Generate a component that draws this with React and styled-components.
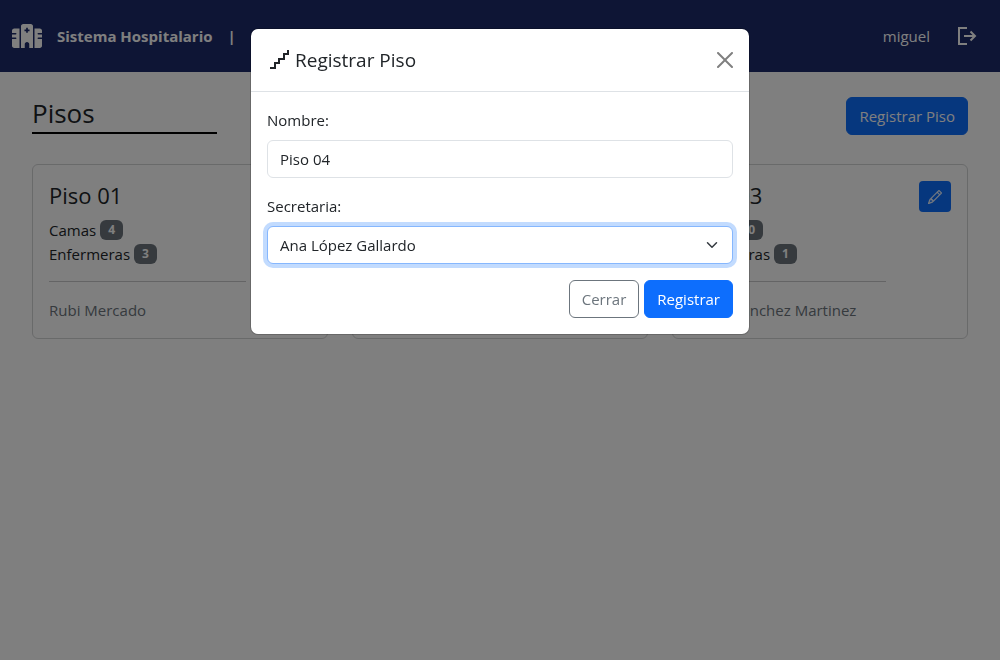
import React, { useState } from "react";
import styled, { createGlobalStyle } from "styled-components";
import { BsPencil } from "react-icons/bs";

const GlobalStyle = createGlobalStyle`
  *, *::before, *::after { box-sizing: border-box; }
  body {
    margin: 0;
    background: #fff;
    color: #212529;
    font-family: "Segoe UI", "Open Sans", "Noto Sans", sans-serif;
    font-size: 15px;
    line-height: 24px;
  }
  button, input, select { font: inherit; }
`;

const Navbar = styled.header`
  display: flex;
  align-items: center;
  justify-content: space-between;
  height: 72px;
  padding: 0 22px 0 12px;
  background: #1c2a6b;
  color: #fff;
`;

const Brand = styled.a`
  display: flex;
  align-items: center;
  gap: 15px;
  color: inherit;
  font-weight: 700;
  text-decoration: none;
`;

const UserArea = styled.div`
  display: flex;
  align-items: center;
  gap: 24px;
`;

const IconButton = styled.button`
  display: flex;
  padding: 0;
  border: 0;
  background: none;
  color: inherit;
`;

const Main = styled.main`
  padding: 25px 32px;
`;

const PageHead = styled.div`
  display: flex;
  align-items: center;
  justify-content: space-between;
  margin-bottom: 29px;
`;

const PageTitle = styled.h1`
  width: 185px;
  margin: 0;
  padding-bottom: 4px;
  border-bottom: 2px solid #000;
  font-size: 26px;
  font-weight: 500;
  line-height: 30px;
`;

const Button = styled.button`
  height: 38px;
  padding: 0 12px;
  border: 1px solid ${(p) => (p.$outline ? "#6c757d" : "#0d6efd")};
  border-radius: 6px;
  background: ${(p) => (p.$outline ? "#fff" : "#0d6efd")};
  color: ${(p) => (p.$outline ? "#6c757d" : "#fff")};
  white-space: nowrap;
`;

const CardGrid = styled.section`
  display: grid;
  grid-template-columns: repeat(3, minmax(0, 1fr));
  gap: 24px;
`;

const Card = styled.article`
  display: flex;
  align-items: flex-start;
  justify-content: space-between;
  padding: 16px;
  border: 1px solid #d3d4d5;
  border-radius: 6px;
`;

const CardInfo = styled.div`
  flex: 0 0 75%;
`;

const CardTitle = styled.h2`
  margin: 0 0 8px;
  font-size: 22px;
  font-weight: 500;
  line-height: 29px;
`;

const Stat = styled.div`
  display: flex;
  align-items: center;
  gap: 4px;
`;

const Badge = styled.span`
  padding: 0 8px;
  border-radius: 6px;
  background: #6c757d;
  color: #fff;
  font-size: 12px;
  font-weight: 700;
  line-height: 20px;
`;

const Divider = styled.hr`
  margin: 15px 0 16px;
  border: 0;
  border-top: 1px solid #c8c9ca;
`;

const Secretary = styled.p`
  margin: 0;
  color: #6c757d;
  white-space: nowrap;
`;

const EditButton = styled.button`
  display: flex;
  align-items: center;
  justify-content: center;
  width: 32px;
  height: 31px;
  padding: 0;
  border: 0;
  border-radius: 4px;
  background: #0d6efd;
  color: #fff;

  svg {
    stroke: currentColor;
    stroke-width: 0.4;
  }
`;

const Backdrop = styled.div`
  position: fixed;
  inset: 0;
  overflow-y: auto;
  padding: 28px 16px;
  background: rgba(0, 0, 0, 0.5);
`;

const Dialog = styled.div`
  max-width: 500px;
  margin: 0 auto;
  border: 1px solid rgba(0, 0, 0, 0.18);
  border-radius: 8px;
  background: #fff;
  background-clip: padding-box;
`;

const DialogHeader = styled.div`
  display: flex;
  align-items: center;
  justify-content: space-between;
  padding: 16px;
  border-bottom: 1px solid #dee2e6;
`;

const DialogTitle = styled.h2`
  display: flex;
  align-items: center;
  gap: 4px;
  margin: 0;
  font-size: 19px;
  font-weight: 500;
  line-height: 30px;
`;

const Form = styled.form`
  padding: 16px;
`;

const Field = styled.div`
  margin-bottom: 16px;
`;

const Label = styled.label`
  display: block;
  margin-bottom: 8px;
`;

const TextInput = styled.input`
  display: block;
  width: 100%;
  height: 38px;
  padding: 0 12px;
  border: 1px solid #dee2e6;
  border-radius: 6px;
  background: #fff;
  color: inherit;
  outline: 0;

  &:focus {
    border-color: #86b7fe;
    box-shadow: 0 0 0 4px rgba(13, 110, 253, 0.25);
  }
`;

const SelectWrap = styled.div`
  position: relative;

  svg {
    position: absolute;
    top: 13px;
    right: 15px;
    pointer-events: none;
  }
`;

const Select = styled(TextInput).attrs({ as: "select" })`
  appearance: none;
`;

const Actions = styled.div`
  display: flex;
  justify-content: flex-end;
  gap: 5px;
`;

const HospitalIcon = () => (
  <svg width="30" height="24" viewBox="0 0 640 512" fill="currentColor" fillRule="evenodd" aria-hidden="true">
    <path d="M192 48c0-26.5 21.5-48 48-48h160c26.5 0 48 21.5 48 48v464h-80v-80c0-26.5-21.5-48-48-48s-48 21.5-48 48v80h-80zM302 80v36h-36v36h36v36h36v-36h36v-36h-36V80z" />
    <path d="M48 96h112v416H48c-26.500 0-48-21.500-48-48V320h80c8.800 0 16-7.200 16-16s-7.200-16-16-16H0v-64h80c8.800 0 16-7.200 16-16s-7.200-16-16-16H0v-48c0-26.500 21.500-48 48-48z" />
    <path d="M592 96H480v416h112c26.500 0 48-21.500 48-48V320h-80c-8.800 0-16-7.200-16-16s7.200-16 16-16h80v-64h-80c-8.800 0-16-7.200-16-16s7.200-16 16-16h80v-48c0-26.500-21.500-48-48-48z" />
  </svg>
);

const LogoutIcon = () => (
  <svg width="24" height="24" viewBox="0 0 24 24" fill="none" stroke="currentColor" strokeWidth="2" aria-hidden="true">
    <path d="M13 4H5v16h8M10 12h11M16.500 7.500L21 12l-4.500 4.500" />
  </svg>
);

const StairsIcon = () => (
  <svg width="24" height="24" viewBox="0 0 24 24" fill="none" stroke="currentColor" strokeWidth="2" aria-hidden="true">
    <path d="M3 20h5v-5h4v-4h5V6h4V2" />
  </svg>
);

const CloseIcon = () => (
  <svg width="16" height="16" viewBox="0 0 16 16" fill="#808080" aria-hidden="true">
    <path d="M.293.293a1 1 0 0 1 1.414 0L8 6.586 14.293.293a1 1 0 1 1 1.414 1.414L9.414 8l6.293 6.293a1 1 0 0 1-1.414 1.414L8 9.414l-6.293 6.293a1 1 0 0 1-1.414-1.414L6.586 8 .293 1.707a1 1 0 0 1 0-1.414z" />
  </svg>
);

const ChevronIcon = () => (
  <svg width="12" height="12" viewBox="0 0 16 16" fill="none" stroke="#343a40" strokeWidth="2" strokeLinecap="round" strokeLinejoin="round" aria-hidden="true">
    <path d="m2 5 6 6 6-6" />
  </svg>
);

const floors = [
  { name: "Piso 01", beds: 4, nurses: 3, secretary: "Rubi Mercado" },
  { name: "Piso 02", beds: 2, nurses: 2, secretary: "Laura Torres" },
  { name: "Piso 03", beds: 0, nurses: 1, secretary: "Diego Sánchez Martinez" },
];

export default function App() {
  const [name, setName] = useState("Piso 04");

  return (
    <>
      <GlobalStyle />
      <Navbar>
        <Brand href="#">
          <HospitalIcon />
          <span>Sistema Hospitalario</span>
          <span>|</span>
        </Brand>
        <UserArea>
          <span>miguel</span>
          <IconButton type="button" aria-label="Salir">
            <LogoutIcon />
          </IconButton>
        </UserArea>
      </Navbar>
      <Main>
        <PageHead>
          <PageTitle>Pisos</PageTitle>
          <Button type="button">Registrar Piso</Button>
        </PageHead>
        <CardGrid>
          {floors.map((floor) => (
            <Card key={floor.name}>
              <CardInfo>
                <CardTitle>{floor.name}</CardTitle>
                <Stat>Camas <Badge>{floor.beds}</Badge></Stat>
                <Stat>Enfermeras <Badge>{floor.nurses}</Badge></Stat>
                <Divider />
                <Secretary>{floor.secretary}</Secretary>
              </CardInfo>
              <EditButton type="button" aria-label={`Editar ${floor.name}`}>
                <BsPencil size={14} />
              </EditButton>
            </Card>
          ))}
        </CardGrid>
      </Main>
      <Backdrop>
        <Dialog role="dialog" aria-modal="true" aria-labelledby="dialog-title">
          <DialogHeader>
            <DialogTitle id="dialog-title">
              <StairsIcon />
              Registrar Piso
            </DialogTitle>
            <IconButton type="button" aria-label="Cerrar ventana">
              <CloseIcon />
            </IconButton>
          </DialogHeader>
          <Form onSubmit={(e) => e.preventDefault()}>
            <Field>
              <Label htmlFor="name">Nombre:</Label>
              <TextInput id="name" value={name} onChange={(e) => setName(e.target.value)} />
            </Field>
            <Field>
              <Label htmlFor="secretary">Secretaria:</Label>
              <SelectWrap>
                <Select id="secretary" autoFocus>
                  <option>Ana López Gallardo</option>
                </Select>
                <ChevronIcon />
              </SelectWrap>
            </Field>
            <Actions>
              <Button type="button" $outline>Cerrar</Button>
              <Button type="submit">Registrar</Button>
            </Actions>
          </Form>
        </Dialog>
      </Backdrop>
    </>
  );
}
